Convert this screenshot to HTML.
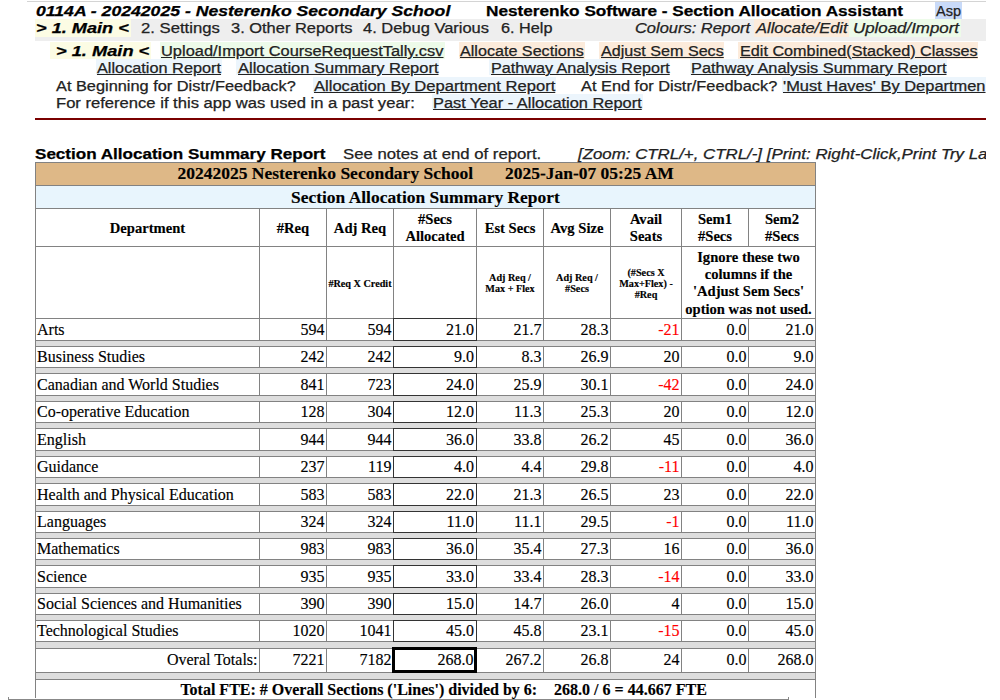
<!DOCTYPE html>
<html><head><meta charset="utf-8"><title>Section Allocation Summary Report</title>
<style>
html,body{margin:0;padding:0;background:#fff;width:1000px;height:700px;overflow:hidden}
#clip{position:absolute;left:0;top:0;width:986px;height:700px;overflow:hidden}
</style></head><body><div id="clip">
<div style="position:absolute;left:27px;top:1px;width:959px;height:1px;background:#d4d4d4"></div>
<div style="position:absolute;left:35px;top:19px;width:951px;height:22px;background:#eeeeee"></div>
<div style="position:absolute;left:35px;top:19px;width:96px;height:18px;background:#fcfce4"></div>
<div style="position:absolute;left:935px;top:2px;width:27px;height:17px;background:#c9daf8"></div>
<div style="position:absolute;left:754px;top:19px;width:95px;height:18px;background:#fcebdb"></div>
<div style="position:absolute;left:849px;top:19px;width:112px;height:18px;background:#edfbe9"></div>
<div style="position:absolute;left:50px;top:42px;width:101px;height:17px;background:#fcfce4"></div>
<div style="position:absolute;left:160px;top:42px;width:285px;height:17px;background:#edfbe9"></div>
<div style="position:absolute;left:459px;top:42px;width:126px;height:17px;background:#fcebdb"></div>
<div style="position:absolute;left:599px;top:42px;width:125px;height:17px;background:#fcebdb"></div>
<div style="position:absolute;left:738px;top:42px;width:240px;height:17px;background:#fcebdb"></div>
<div style="position:absolute;left:96px;top:59px;width:126px;height:16px;background:#ecf5fc"></div>
<div style="position:absolute;left:236px;top:59px;width:203px;height:16px;background:#ecf5fc"></div>
<div style="position:absolute;left:489px;top:59px;width:181px;height:16px;background:#ecf5fc"></div>
<div style="position:absolute;left:690px;top:59px;width:257px;height:16px;background:#ecf5fc"></div>
<div style="position:absolute;left:313px;top:77px;width:243px;height:16px;background:#ecf5fc"></div>
<div style="position:absolute;left:782px;top:77px;width:204px;height:16px;background:#ecf5fc"></div>
<div style="position:absolute;left:432px;top:94px;width:211px;height:16px;background:#ecf5fc"></div>
<div style="position:absolute;left:35px;top:118px;width:951px;height:2px;background:#7a0000"></div>
<div style="position:absolute;left:36px;top:163px;width:779px;height:22px;background:#deb887"></div>
<div style="position:absolute;left:36px;top:186px;width:779px;height:22px;background:#e8f5fd"></div>
<div style="position:absolute;left:36px;top:341px;width:779px;height:5px;background:#dddddd"></div>
<div style="position:absolute;left:36px;top:368px;width:779px;height:5px;background:#dddddd"></div>
<div style="position:absolute;left:36px;top:396px;width:779px;height:5px;background:#dddddd"></div>
<div style="position:absolute;left:36px;top:423px;width:779px;height:5px;background:#dddddd"></div>
<div style="position:absolute;left:36px;top:451px;width:779px;height:5px;background:#dddddd"></div>
<div style="position:absolute;left:36px;top:478px;width:779px;height:5px;background:#dddddd"></div>
<div style="position:absolute;left:36px;top:506px;width:779px;height:5px;background:#dddddd"></div>
<div style="position:absolute;left:36px;top:533px;width:779px;height:5px;background:#dddddd"></div>
<div style="position:absolute;left:36px;top:560px;width:779px;height:5px;background:#dddddd"></div>
<div style="position:absolute;left:36px;top:588px;width:779px;height:5px;background:#dddddd"></div>
<div style="position:absolute;left:36px;top:615px;width:779px;height:5px;background:#dddddd"></div>
<div style="position:absolute;left:36px;top:642px;width:779px;height:6px;background:#dddddd"></div>
<div style="position:absolute;left:36px;top:673px;width:779px;height:6px;background:#dddddd"></div>
<div style="position:absolute;left:35px;top:162px;width:781px;height:1px;background:#828282"></div>
<div style="position:absolute;left:35px;top:185px;width:781px;height:1px;background:#828282"></div>
<div style="position:absolute;left:35px;top:208px;width:781px;height:1px;background:#828282"></div>
<div style="position:absolute;left:35px;top:246px;width:781px;height:1px;background:#828282"></div>
<div style="position:absolute;left:35px;top:318px;width:781px;height:1px;background:#828282"></div>
<div style="position:absolute;left:35px;top:340px;width:781px;height:1px;background:#828282"></div>
<div style="position:absolute;left:35px;top:346px;width:781px;height:1px;background:#828282"></div>
<div style="position:absolute;left:35px;top:367px;width:781px;height:1px;background:#828282"></div>
<div style="position:absolute;left:35px;top:373px;width:781px;height:1px;background:#828282"></div>
<div style="position:absolute;left:35px;top:395px;width:781px;height:1px;background:#828282"></div>
<div style="position:absolute;left:35px;top:401px;width:781px;height:1px;background:#828282"></div>
<div style="position:absolute;left:35px;top:422px;width:781px;height:1px;background:#828282"></div>
<div style="position:absolute;left:35px;top:428px;width:781px;height:1px;background:#828282"></div>
<div style="position:absolute;left:35px;top:450px;width:781px;height:1px;background:#828282"></div>
<div style="position:absolute;left:35px;top:456px;width:781px;height:1px;background:#828282"></div>
<div style="position:absolute;left:35px;top:477px;width:781px;height:1px;background:#828282"></div>
<div style="position:absolute;left:35px;top:483px;width:781px;height:1px;background:#828282"></div>
<div style="position:absolute;left:35px;top:505px;width:781px;height:1px;background:#828282"></div>
<div style="position:absolute;left:35px;top:511px;width:781px;height:1px;background:#828282"></div>
<div style="position:absolute;left:35px;top:532px;width:781px;height:1px;background:#828282"></div>
<div style="position:absolute;left:35px;top:538px;width:781px;height:1px;background:#828282"></div>
<div style="position:absolute;left:35px;top:559px;width:781px;height:1px;background:#828282"></div>
<div style="position:absolute;left:35px;top:565px;width:781px;height:1px;background:#828282"></div>
<div style="position:absolute;left:35px;top:587px;width:781px;height:1px;background:#828282"></div>
<div style="position:absolute;left:35px;top:593px;width:781px;height:1px;background:#828282"></div>
<div style="position:absolute;left:35px;top:614px;width:781px;height:1px;background:#828282"></div>
<div style="position:absolute;left:35px;top:620px;width:781px;height:1px;background:#828282"></div>
<div style="position:absolute;left:35px;top:641px;width:781px;height:1px;background:#828282"></div>
<div style="position:absolute;left:35px;top:648px;width:781px;height:1px;background:#828282"></div>
<div style="position:absolute;left:35px;top:672px;width:781px;height:1px;background:#828282"></div>
<div style="position:absolute;left:35px;top:679px;width:781px;height:1px;background:#828282"></div>
<div style="position:absolute;left:8px;top:699px;width:781px;height:1px;background:#888888"></div>
<div style="position:absolute;left:8px;top:697px;width:1px;height:2px;background:#888888"></div>
<div style="position:absolute;left:788px;top:697px;width:1px;height:2px;background:#888888"></div>
<div style="position:absolute;left:35px;top:162px;width:1px;height:536px;background:#828282"></div>
<div style="position:absolute;left:815px;top:162px;width:1px;height:536px;background:#828282"></div>
<div style="position:absolute;left:259px;top:208px;width:1px;height:39px;background:#828282"></div>
<div style="position:absolute;left:326px;top:208px;width:1px;height:39px;background:#828282"></div>
<div style="position:absolute;left:393px;top:208px;width:1px;height:39px;background:#828282"></div>
<div style="position:absolute;left:476px;top:208px;width:1px;height:39px;background:#828282"></div>
<div style="position:absolute;left:543px;top:208px;width:1px;height:39px;background:#828282"></div>
<div style="position:absolute;left:610px;top:208px;width:1px;height:39px;background:#828282"></div>
<div style="position:absolute;left:681px;top:208px;width:1px;height:39px;background:#828282"></div>
<div style="position:absolute;left:748px;top:208px;width:1px;height:39px;background:#828282"></div>
<div style="position:absolute;left:259px;top:246px;width:1px;height:73px;background:#828282"></div>
<div style="position:absolute;left:326px;top:246px;width:1px;height:73px;background:#828282"></div>
<div style="position:absolute;left:393px;top:246px;width:1px;height:73px;background:#828282"></div>
<div style="position:absolute;left:476px;top:246px;width:1px;height:73px;background:#828282"></div>
<div style="position:absolute;left:543px;top:246px;width:1px;height:73px;background:#828282"></div>
<div style="position:absolute;left:610px;top:246px;width:1px;height:73px;background:#828282"></div>
<div style="position:absolute;left:681px;top:246px;width:1px;height:73px;background:#828282"></div>
<div style="position:absolute;left:259px;top:318px;width:1px;height:23px;background:#828282"></div>
<div style="position:absolute;left:326px;top:318px;width:1px;height:23px;background:#828282"></div>
<div style="position:absolute;left:393px;top:318px;width:1px;height:23px;background:#828282"></div>
<div style="position:absolute;left:476px;top:318px;width:1px;height:23px;background:#828282"></div>
<div style="position:absolute;left:543px;top:318px;width:1px;height:23px;background:#828282"></div>
<div style="position:absolute;left:610px;top:318px;width:1px;height:23px;background:#828282"></div>
<div style="position:absolute;left:681px;top:318px;width:1px;height:23px;background:#828282"></div>
<div style="position:absolute;left:748px;top:318px;width:1px;height:23px;background:#828282"></div>
<div style="position:absolute;left:259px;top:346px;width:1px;height:22px;background:#828282"></div>
<div style="position:absolute;left:326px;top:346px;width:1px;height:22px;background:#828282"></div>
<div style="position:absolute;left:393px;top:346px;width:1px;height:22px;background:#828282"></div>
<div style="position:absolute;left:476px;top:346px;width:1px;height:22px;background:#828282"></div>
<div style="position:absolute;left:543px;top:346px;width:1px;height:22px;background:#828282"></div>
<div style="position:absolute;left:610px;top:346px;width:1px;height:22px;background:#828282"></div>
<div style="position:absolute;left:681px;top:346px;width:1px;height:22px;background:#828282"></div>
<div style="position:absolute;left:748px;top:346px;width:1px;height:22px;background:#828282"></div>
<div style="position:absolute;left:259px;top:373px;width:1px;height:23px;background:#828282"></div>
<div style="position:absolute;left:326px;top:373px;width:1px;height:23px;background:#828282"></div>
<div style="position:absolute;left:393px;top:373px;width:1px;height:23px;background:#828282"></div>
<div style="position:absolute;left:476px;top:373px;width:1px;height:23px;background:#828282"></div>
<div style="position:absolute;left:543px;top:373px;width:1px;height:23px;background:#828282"></div>
<div style="position:absolute;left:610px;top:373px;width:1px;height:23px;background:#828282"></div>
<div style="position:absolute;left:681px;top:373px;width:1px;height:23px;background:#828282"></div>
<div style="position:absolute;left:748px;top:373px;width:1px;height:23px;background:#828282"></div>
<div style="position:absolute;left:259px;top:401px;width:1px;height:22px;background:#828282"></div>
<div style="position:absolute;left:326px;top:401px;width:1px;height:22px;background:#828282"></div>
<div style="position:absolute;left:393px;top:401px;width:1px;height:22px;background:#828282"></div>
<div style="position:absolute;left:476px;top:401px;width:1px;height:22px;background:#828282"></div>
<div style="position:absolute;left:543px;top:401px;width:1px;height:22px;background:#828282"></div>
<div style="position:absolute;left:610px;top:401px;width:1px;height:22px;background:#828282"></div>
<div style="position:absolute;left:681px;top:401px;width:1px;height:22px;background:#828282"></div>
<div style="position:absolute;left:748px;top:401px;width:1px;height:22px;background:#828282"></div>
<div style="position:absolute;left:259px;top:428px;width:1px;height:23px;background:#828282"></div>
<div style="position:absolute;left:326px;top:428px;width:1px;height:23px;background:#828282"></div>
<div style="position:absolute;left:393px;top:428px;width:1px;height:23px;background:#828282"></div>
<div style="position:absolute;left:476px;top:428px;width:1px;height:23px;background:#828282"></div>
<div style="position:absolute;left:543px;top:428px;width:1px;height:23px;background:#828282"></div>
<div style="position:absolute;left:610px;top:428px;width:1px;height:23px;background:#828282"></div>
<div style="position:absolute;left:681px;top:428px;width:1px;height:23px;background:#828282"></div>
<div style="position:absolute;left:748px;top:428px;width:1px;height:23px;background:#828282"></div>
<div style="position:absolute;left:259px;top:456px;width:1px;height:22px;background:#828282"></div>
<div style="position:absolute;left:326px;top:456px;width:1px;height:22px;background:#828282"></div>
<div style="position:absolute;left:393px;top:456px;width:1px;height:22px;background:#828282"></div>
<div style="position:absolute;left:476px;top:456px;width:1px;height:22px;background:#828282"></div>
<div style="position:absolute;left:543px;top:456px;width:1px;height:22px;background:#828282"></div>
<div style="position:absolute;left:610px;top:456px;width:1px;height:22px;background:#828282"></div>
<div style="position:absolute;left:681px;top:456px;width:1px;height:22px;background:#828282"></div>
<div style="position:absolute;left:748px;top:456px;width:1px;height:22px;background:#828282"></div>
<div style="position:absolute;left:259px;top:483px;width:1px;height:23px;background:#828282"></div>
<div style="position:absolute;left:326px;top:483px;width:1px;height:23px;background:#828282"></div>
<div style="position:absolute;left:393px;top:483px;width:1px;height:23px;background:#828282"></div>
<div style="position:absolute;left:476px;top:483px;width:1px;height:23px;background:#828282"></div>
<div style="position:absolute;left:543px;top:483px;width:1px;height:23px;background:#828282"></div>
<div style="position:absolute;left:610px;top:483px;width:1px;height:23px;background:#828282"></div>
<div style="position:absolute;left:681px;top:483px;width:1px;height:23px;background:#828282"></div>
<div style="position:absolute;left:748px;top:483px;width:1px;height:23px;background:#828282"></div>
<div style="position:absolute;left:259px;top:511px;width:1px;height:22px;background:#828282"></div>
<div style="position:absolute;left:326px;top:511px;width:1px;height:22px;background:#828282"></div>
<div style="position:absolute;left:393px;top:511px;width:1px;height:22px;background:#828282"></div>
<div style="position:absolute;left:476px;top:511px;width:1px;height:22px;background:#828282"></div>
<div style="position:absolute;left:543px;top:511px;width:1px;height:22px;background:#828282"></div>
<div style="position:absolute;left:610px;top:511px;width:1px;height:22px;background:#828282"></div>
<div style="position:absolute;left:681px;top:511px;width:1px;height:22px;background:#828282"></div>
<div style="position:absolute;left:748px;top:511px;width:1px;height:22px;background:#828282"></div>
<div style="position:absolute;left:259px;top:538px;width:1px;height:22px;background:#828282"></div>
<div style="position:absolute;left:326px;top:538px;width:1px;height:22px;background:#828282"></div>
<div style="position:absolute;left:393px;top:538px;width:1px;height:22px;background:#828282"></div>
<div style="position:absolute;left:476px;top:538px;width:1px;height:22px;background:#828282"></div>
<div style="position:absolute;left:543px;top:538px;width:1px;height:22px;background:#828282"></div>
<div style="position:absolute;left:610px;top:538px;width:1px;height:22px;background:#828282"></div>
<div style="position:absolute;left:681px;top:538px;width:1px;height:22px;background:#828282"></div>
<div style="position:absolute;left:748px;top:538px;width:1px;height:22px;background:#828282"></div>
<div style="position:absolute;left:259px;top:565px;width:1px;height:23px;background:#828282"></div>
<div style="position:absolute;left:326px;top:565px;width:1px;height:23px;background:#828282"></div>
<div style="position:absolute;left:393px;top:565px;width:1px;height:23px;background:#828282"></div>
<div style="position:absolute;left:476px;top:565px;width:1px;height:23px;background:#828282"></div>
<div style="position:absolute;left:543px;top:565px;width:1px;height:23px;background:#828282"></div>
<div style="position:absolute;left:610px;top:565px;width:1px;height:23px;background:#828282"></div>
<div style="position:absolute;left:681px;top:565px;width:1px;height:23px;background:#828282"></div>
<div style="position:absolute;left:748px;top:565px;width:1px;height:23px;background:#828282"></div>
<div style="position:absolute;left:259px;top:593px;width:1px;height:22px;background:#828282"></div>
<div style="position:absolute;left:326px;top:593px;width:1px;height:22px;background:#828282"></div>
<div style="position:absolute;left:393px;top:593px;width:1px;height:22px;background:#828282"></div>
<div style="position:absolute;left:476px;top:593px;width:1px;height:22px;background:#828282"></div>
<div style="position:absolute;left:543px;top:593px;width:1px;height:22px;background:#828282"></div>
<div style="position:absolute;left:610px;top:593px;width:1px;height:22px;background:#828282"></div>
<div style="position:absolute;left:681px;top:593px;width:1px;height:22px;background:#828282"></div>
<div style="position:absolute;left:748px;top:593px;width:1px;height:22px;background:#828282"></div>
<div style="position:absolute;left:259px;top:620px;width:1px;height:22px;background:#828282"></div>
<div style="position:absolute;left:326px;top:620px;width:1px;height:22px;background:#828282"></div>
<div style="position:absolute;left:393px;top:620px;width:1px;height:22px;background:#828282"></div>
<div style="position:absolute;left:476px;top:620px;width:1px;height:22px;background:#828282"></div>
<div style="position:absolute;left:543px;top:620px;width:1px;height:22px;background:#828282"></div>
<div style="position:absolute;left:610px;top:620px;width:1px;height:22px;background:#828282"></div>
<div style="position:absolute;left:681px;top:620px;width:1px;height:22px;background:#828282"></div>
<div style="position:absolute;left:748px;top:620px;width:1px;height:22px;background:#828282"></div>
<div style="position:absolute;left:259px;top:648px;width:1px;height:25px;background:#828282"></div>
<div style="position:absolute;left:326px;top:648px;width:1px;height:25px;background:#828282"></div>
<div style="position:absolute;left:393px;top:648px;width:1px;height:25px;background:#828282"></div>
<div style="position:absolute;left:476px;top:648px;width:1px;height:25px;background:#828282"></div>
<div style="position:absolute;left:543px;top:648px;width:1px;height:25px;background:#828282"></div>
<div style="position:absolute;left:610px;top:648px;width:1px;height:25px;background:#828282"></div>
<div style="position:absolute;left:681px;top:648px;width:1px;height:25px;background:#828282"></div>
<div style="position:absolute;left:748px;top:648px;width:1px;height:25px;background:#828282"></div>
<div style="position:absolute;left:393px;top:318px;width:84px;height:1px;background:#333"></div>
<div style="position:absolute;left:393px;top:340px;width:84px;height:1px;background:#333"></div>
<div style="position:absolute;left:393px;top:318px;width:1px;height:23px;background:#333"></div>
<div style="position:absolute;left:476px;top:318px;width:1px;height:23px;background:#333"></div>
<div style="position:absolute;left:393px;top:346px;width:84px;height:1px;background:#333"></div>
<div style="position:absolute;left:393px;top:367px;width:84px;height:1px;background:#333"></div>
<div style="position:absolute;left:393px;top:346px;width:1px;height:22px;background:#333"></div>
<div style="position:absolute;left:476px;top:346px;width:1px;height:22px;background:#333"></div>
<div style="position:absolute;left:393px;top:373px;width:84px;height:1px;background:#333"></div>
<div style="position:absolute;left:393px;top:395px;width:84px;height:1px;background:#333"></div>
<div style="position:absolute;left:393px;top:373px;width:1px;height:23px;background:#333"></div>
<div style="position:absolute;left:476px;top:373px;width:1px;height:23px;background:#333"></div>
<div style="position:absolute;left:393px;top:401px;width:84px;height:1px;background:#333"></div>
<div style="position:absolute;left:393px;top:422px;width:84px;height:1px;background:#333"></div>
<div style="position:absolute;left:393px;top:401px;width:1px;height:22px;background:#333"></div>
<div style="position:absolute;left:476px;top:401px;width:1px;height:22px;background:#333"></div>
<div style="position:absolute;left:393px;top:428px;width:84px;height:1px;background:#333"></div>
<div style="position:absolute;left:393px;top:450px;width:84px;height:1px;background:#333"></div>
<div style="position:absolute;left:393px;top:428px;width:1px;height:23px;background:#333"></div>
<div style="position:absolute;left:476px;top:428px;width:1px;height:23px;background:#333"></div>
<div style="position:absolute;left:393px;top:456px;width:84px;height:1px;background:#333"></div>
<div style="position:absolute;left:393px;top:477px;width:84px;height:1px;background:#333"></div>
<div style="position:absolute;left:393px;top:456px;width:1px;height:22px;background:#333"></div>
<div style="position:absolute;left:476px;top:456px;width:1px;height:22px;background:#333"></div>
<div style="position:absolute;left:393px;top:483px;width:84px;height:1px;background:#333"></div>
<div style="position:absolute;left:393px;top:505px;width:84px;height:1px;background:#333"></div>
<div style="position:absolute;left:393px;top:483px;width:1px;height:23px;background:#333"></div>
<div style="position:absolute;left:476px;top:483px;width:1px;height:23px;background:#333"></div>
<div style="position:absolute;left:393px;top:511px;width:84px;height:1px;background:#333"></div>
<div style="position:absolute;left:393px;top:532px;width:84px;height:1px;background:#333"></div>
<div style="position:absolute;left:393px;top:511px;width:1px;height:22px;background:#333"></div>
<div style="position:absolute;left:476px;top:511px;width:1px;height:22px;background:#333"></div>
<div style="position:absolute;left:393px;top:538px;width:84px;height:1px;background:#333"></div>
<div style="position:absolute;left:393px;top:559px;width:84px;height:1px;background:#333"></div>
<div style="position:absolute;left:393px;top:538px;width:1px;height:22px;background:#333"></div>
<div style="position:absolute;left:476px;top:538px;width:1px;height:22px;background:#333"></div>
<div style="position:absolute;left:393px;top:565px;width:84px;height:1px;background:#333"></div>
<div style="position:absolute;left:393px;top:587px;width:84px;height:1px;background:#333"></div>
<div style="position:absolute;left:393px;top:565px;width:1px;height:23px;background:#333"></div>
<div style="position:absolute;left:476px;top:565px;width:1px;height:23px;background:#333"></div>
<div style="position:absolute;left:393px;top:593px;width:84px;height:1px;background:#333"></div>
<div style="position:absolute;left:393px;top:614px;width:84px;height:1px;background:#333"></div>
<div style="position:absolute;left:393px;top:593px;width:1px;height:22px;background:#333"></div>
<div style="position:absolute;left:476px;top:593px;width:1px;height:22px;background:#333"></div>
<div style="position:absolute;left:393px;top:620px;width:84px;height:1px;background:#333"></div>
<div style="position:absolute;left:393px;top:641px;width:84px;height:1px;background:#333"></div>
<div style="position:absolute;left:393px;top:620px;width:1px;height:22px;background:#333"></div>
<div style="position:absolute;left:476px;top:620px;width:1px;height:22px;background:#333"></div>
<div style="position:absolute;left:392px;top:647px;width:85px;height:3px;background:#000"></div>
<div style="position:absolute;left:392px;top:670px;width:85px;height:3px;background:#000"></div>
<div style="position:absolute;left:392px;top:647px;width:3px;height:26px;background:#000"></div>
<div style="position:absolute;left:474px;top:647px;width:3px;height:26px;background:#000"></div>
<div style="position:absolute;left:35.50px;top:3.00px;white-space:pre;line-height:normal;color:#000;font-family:'Liberation Sans', sans-serif;font-size:14px;font-weight:bold;font-style:italic;text-decoration:none;transform:scaleX(1.2586);transform-origin:0 0;-webkit-text-stroke:0.25px #000;">0114A - 20242025 - Nesterenko Secondary School</div>
<div style="position:absolute;left:486.00px;top:3.00px;white-space:pre;line-height:normal;color:#000;font-family:'Liberation Sans', sans-serif;font-size:14px;font-weight:bold;font-style:normal;text-decoration:none;transform:scaleX(1.2275);transform-origin:0 0;-webkit-text-stroke:0.25px #000;">Nesterenko Software - Section Allocation Assistant</div>
<div style="position:absolute;left:935.80px;top:3.00px;white-space:pre;line-height:normal;color:#222;font-family:'Liberation Sans', sans-serif;font-size:14px;font-weight:normal;font-style:normal;text-decoration:none;transform:scaleX(1.0363);transform-origin:0 0;-webkit-text-stroke:0.25px #222;">Asp</div>
<div style="position:absolute;left:36.00px;top:20.00px;white-space:pre;line-height:normal;color:#000;font-family:'Liberation Sans', sans-serif;font-size:14px;font-weight:bold;font-style:italic;text-decoration:none;transform:scaleX(1.2955);transform-origin:0 0;-webkit-text-stroke:0.25px #000;">&gt; 1. Main &lt;</div>
<div style="position:absolute;left:141.25px;top:20.00px;white-space:pre;line-height:normal;color:#222;font-family:'Liberation Sans', sans-serif;font-size:14px;font-weight:normal;font-style:normal;text-decoration:none;transform:scaleX(1.1904);transform-origin:0 0;-webkit-text-stroke:0.25px #222;">2. Settings</div>
<div style="position:absolute;left:231.00px;top:20.00px;white-space:pre;line-height:normal;color:#222;font-family:'Liberation Sans', sans-serif;font-size:14px;font-weight:normal;font-style:normal;text-decoration:none;transform:scaleX(1.1739);transform-origin:0 0;-webkit-text-stroke:0.25px #222;">3. Other Reports</div>
<div style="position:absolute;left:363.00px;top:20.00px;white-space:pre;line-height:normal;color:#222;font-family:'Liberation Sans', sans-serif;font-size:14px;font-weight:normal;font-style:normal;text-decoration:none;transform:scaleX(1.1760);transform-origin:0 0;-webkit-text-stroke:0.25px #222;">4. Debug Various</div>
<div style="position:absolute;left:500.60px;top:20.00px;white-space:pre;line-height:normal;color:#222;font-family:'Liberation Sans', sans-serif;font-size:14px;font-weight:normal;font-style:normal;text-decoration:none;transform:scaleX(1.1587);transform-origin:0 0;-webkit-text-stroke:0.25px #222;">6. Help</div>
<div style="position:absolute;left:635.40px;top:20.00px;white-space:pre;line-height:normal;color:#222;font-family:'Liberation Sans', sans-serif;font-size:14px;font-weight:normal;font-style:italic;text-decoration:none;transform:scaleX(1.1739);transform-origin:0 0;-webkit-text-stroke:0.25px #222;">Colours: Report</div>
<div style="position:absolute;left:756.00px;top:20.00px;white-space:pre;line-height:normal;color:#222;font-family:'Liberation Sans', sans-serif;font-size:14px;font-weight:normal;font-style:italic;text-decoration:none;transform:scaleX(1.1770);transform-origin:0 0;-webkit-text-stroke:0.25px #222;">Allocate/Edit</div>
<div style="position:absolute;left:853.00px;top:20.00px;white-space:pre;line-height:normal;color:#222;font-family:'Liberation Sans', sans-serif;font-size:14px;font-weight:normal;font-style:italic;text-decoration:none;transform:scaleX(1.2054);transform-origin:0 0;-webkit-text-stroke:0.25px #222;">Upload/Import</div>
<div style="position:absolute;left:56.25px;top:43.00px;white-space:pre;line-height:normal;color:#000;font-family:'Liberation Sans', sans-serif;font-size:14px;font-weight:bold;font-style:italic;text-decoration:none;transform:scaleX(1.3025);transform-origin:0 0;-webkit-text-stroke:0.25px #000;">&gt; 1. Main &lt;</div>
<div style="position:absolute;left:161.25px;top:43.00px;white-space:pre;line-height:normal;color:#222;font-family:'Liberation Sans', sans-serif;font-size:14px;font-weight:normal;font-style:normal;text-decoration:underline;transform:scaleX(1.1724);transform-origin:0 0;-webkit-text-stroke:0.25px #222;">Upload/Import CourseRequestTally.csv</div>
<div style="position:absolute;left:460.00px;top:43.00px;white-space:pre;line-height:normal;color:#222;font-family:'Liberation Sans', sans-serif;font-size:14px;font-weight:normal;font-style:normal;text-decoration:underline;transform:scaleX(1.1522);transform-origin:0 0;-webkit-text-stroke:0.25px #222;">Allocate Sections</div>
<div style="position:absolute;left:600.50px;top:43.00px;white-space:pre;line-height:normal;color:#222;font-family:'Liberation Sans', sans-serif;font-size:14px;font-weight:normal;font-style:normal;text-decoration:underline;transform:scaleX(1.1514);transform-origin:0 0;-webkit-text-stroke:0.25px #222;">Adjust Sem Secs</div>
<div style="position:absolute;left:739.50px;top:43.00px;white-space:pre;line-height:normal;color:#222;font-family:'Liberation Sans', sans-serif;font-size:14px;font-weight:normal;font-style:normal;text-decoration:underline;transform:scaleX(1.1571);transform-origin:0 0;-webkit-text-stroke:0.25px #222;">Edit Combined(Stacked) Classes</div>
<div style="position:absolute;left:97.00px;top:60.00px;white-space:pre;line-height:normal;color:#222;font-family:'Liberation Sans', sans-serif;font-size:14px;font-weight:normal;font-style:normal;text-decoration:underline;transform:scaleX(1.1630);transform-origin:0 0;-webkit-text-stroke:0.25px #222;">Allocation Report</div>
<div style="position:absolute;left:237.50px;top:60.00px;white-space:pre;line-height:normal;color:#222;font-family:'Liberation Sans', sans-serif;font-size:14px;font-weight:normal;font-style:normal;text-decoration:underline;transform:scaleX(1.1766);transform-origin:0 0;-webkit-text-stroke:0.25px #222;">Allocation Summary Report</div>
<div style="position:absolute;left:490.75px;top:60.00px;white-space:pre;line-height:normal;color:#222;font-family:'Liberation Sans', sans-serif;font-size:14px;font-weight:normal;font-style:normal;text-decoration:underline;transform:scaleX(1.1543);transform-origin:0 0;-webkit-text-stroke:0.25px #222;">Pathway Analysis Report</div>
<div style="position:absolute;left:691.25px;top:60.00px;white-space:pre;line-height:normal;color:#222;font-family:'Liberation Sans', sans-serif;font-size:14px;font-weight:normal;font-style:normal;text-decoration:underline;transform:scaleX(1.1684);transform-origin:0 0;-webkit-text-stroke:0.25px #222;">Pathway Analysis Summary Report</div>
<div style="position:absolute;left:56.25px;top:78.00px;white-space:pre;line-height:normal;color:#222;font-family:'Liberation Sans', sans-serif;font-size:14px;font-weight:normal;font-style:normal;text-decoration:none;transform:scaleX(1.1669);transform-origin:0 0;-webkit-text-stroke:0.25px #222;">At Beginning for Distr/Feedback?</div>
<div style="position:absolute;left:313.75px;top:78.00px;white-space:pre;line-height:normal;color:#222;font-family:'Liberation Sans', sans-serif;font-size:14px;font-weight:normal;font-style:normal;text-decoration:underline;transform:scaleX(1.1833);transform-origin:0 0;-webkit-text-stroke:0.25px #222;">Allocation By Department Report</div>
<div style="position:absolute;left:581.25px;top:78.00px;white-space:pre;line-height:normal;color:#222;font-family:'Liberation Sans', sans-serif;font-size:14px;font-weight:normal;font-style:normal;text-decoration:none;transform:scaleX(1.1676);transform-origin:0 0;-webkit-text-stroke:0.25px #222;">At End for Distr/Feedback?</div>
<div style="position:absolute;left:783.30px;top:78.00px;white-space:pre;line-height:normal;color:#222;font-family:'Liberation Sans', sans-serif;font-size:14px;font-weight:normal;font-style:normal;text-decoration:underline;transform:scaleX(1.1730);transform-origin:0 0;-webkit-text-stroke:0.25px #222;">&#x27;Must Haves&#x27; By Departmen</div>
<div style="position:absolute;left:56.25px;top:95.00px;white-space:pre;line-height:normal;color:#222;font-family:'Liberation Sans', sans-serif;font-size:14px;font-weight:normal;font-style:normal;text-decoration:none;transform:scaleX(1.1851);transform-origin:0 0;-webkit-text-stroke:0.25px #222;">For reference if this app was used in a past year:</div>
<div style="position:absolute;left:433.00px;top:95.00px;white-space:pre;line-height:normal;color:#222;font-family:'Liberation Sans', sans-serif;font-size:14px;font-weight:normal;font-style:normal;text-decoration:underline;transform:scaleX(1.1712);transform-origin:0 0;-webkit-text-stroke:0.25px #222;">Past Year - Allocation Report</div>
<div style="position:absolute;left:35.40px;top:145.00px;white-space:pre;line-height:normal;color:#000;font-family:'Liberation Sans', sans-serif;font-size:15px;font-weight:bold;font-style:normal;text-decoration:none;transform:scaleX(1.1374);transform-origin:0 0;-webkit-text-stroke:0.25px #000;">Section Allocation Summary Report</div>
<div style="position:absolute;left:342.50px;top:146.00px;white-space:pre;line-height:normal;color:#222;font-family:'Liberation Sans', sans-serif;font-size:14px;font-weight:normal;font-style:normal;text-decoration:none;transform:scaleX(1.1956);transform-origin:0 0;-webkit-text-stroke:0.25px #222;">See notes at end of report.</div>
<div style="position:absolute;left:578.00px;top:146.00px;white-space:pre;line-height:normal;color:#222;font-family:'Liberation Sans', sans-serif;font-size:14px;font-weight:normal;font-style:italic;text-decoration:none;transform:scaleX(1.2039);transform-origin:0 0;-webkit-text-stroke:0.25px #222;">[Zoom: CTRL/+, CTRL/-] [Print: Right-Click,Print Try Landscape]</div>
<div style="position:absolute;left:177.40px;top:163.00px;white-space:pre;line-height:normal;color:#000;font-family:'Liberation Serif', serif;font-size:17.5px;font-weight:bold;font-style:normal;text-decoration:none;-webkit-text-stroke:0.15px #000;">20242025 Nesterenko Secondary School</div>
<div style="position:absolute;left:505.00px;top:163.00px;white-space:pre;line-height:normal;color:#000;font-family:'Liberation Serif', serif;font-size:17.5px;font-weight:bold;font-style:normal;text-decoration:none;transform:scaleX(0.9979);transform-origin:0 0;-webkit-text-stroke:0.15px #000;">2025-Jan-07 05:25 AM</div>
<div style="position:absolute;left:291.20px;top:187.00px;white-space:pre;line-height:normal;color:#000;font-family:'Liberation Serif', serif;font-size:17.5px;font-weight:bold;font-style:normal;text-decoration:none;transform:scaleX(0.9964);transform-origin:0 0;-webkit-text-stroke:0.15px #000;">Section Allocation Summary Report</div>
<div style="position:absolute;left:109.80px;top:220.00px;white-space:pre;line-height:normal;color:#000;font-family:'Liberation Serif', serif;font-size:14.6px;font-weight:bold;font-style:normal;text-decoration:none;-webkit-text-stroke:0.15px #000;">Department</div>
<div style="position:absolute;left:276.78px;top:220.00px;white-space:pre;line-height:normal;color:#000;font-family:'Liberation Serif', serif;font-size:14.6px;font-weight:bold;font-style:normal;text-decoration:none;-webkit-text-stroke:0.15px #000;">#Req</div>
<div style="position:absolute;left:333.85px;top:220.00px;white-space:pre;line-height:normal;color:#000;font-family:'Liberation Serif', serif;font-size:14.6px;font-weight:bold;font-style:normal;text-decoration:none;-webkit-text-stroke:0.15px #000;">Adj Req</div>
<div style="position:absolute;left:417.97px;top:211.00px;white-space:pre;line-height:normal;color:#000;font-family:'Liberation Serif', serif;font-size:14.6px;font-weight:bold;font-style:normal;text-decoration:none;-webkit-text-stroke:0.15px #000;">#Secs</div>
<div style="position:absolute;left:405.41px;top:228.00px;white-space:pre;line-height:normal;color:#000;font-family:'Liberation Serif', serif;font-size:14.6px;font-weight:bold;font-style:normal;text-decoration:none;-webkit-text-stroke:0.15px #000;">Allocated</div>
<div style="position:absolute;left:484.66px;top:220.00px;white-space:pre;line-height:normal;color:#000;font-family:'Liberation Serif', serif;font-size:14.6px;font-weight:bold;font-style:normal;text-decoration:none;-webkit-text-stroke:0.15px #000;">Est Secs</div>
<div style="position:absolute;left:550.59px;top:220.00px;white-space:pre;line-height:normal;color:#000;font-family:'Liberation Serif', serif;font-size:14.6px;font-weight:bold;font-style:normal;text-decoration:none;-webkit-text-stroke:0.15px #000;">Avg Size</div>
<div style="position:absolute;left:629.91px;top:211.00px;white-space:pre;line-height:normal;color:#000;font-family:'Liberation Serif', serif;font-size:14.6px;font-weight:bold;font-style:normal;text-decoration:none;-webkit-text-stroke:0.15px #000;">Avail</div>
<div style="position:absolute;left:629.78px;top:228.00px;white-space:pre;line-height:normal;color:#000;font-family:'Liberation Serif', serif;font-size:14.6px;font-weight:bold;font-style:normal;text-decoration:none;-webkit-text-stroke:0.15px #000;">Seats</div>
<div style="position:absolute;left:697.97px;top:211.00px;white-space:pre;line-height:normal;color:#000;font-family:'Liberation Serif', serif;font-size:14.6px;font-weight:bold;font-style:normal;text-decoration:none;-webkit-text-stroke:0.15px #000;">Sem1</div>
<div style="position:absolute;left:697.97px;top:228.00px;white-space:pre;line-height:normal;color:#000;font-family:'Liberation Serif', serif;font-size:14.6px;font-weight:bold;font-style:normal;text-decoration:none;-webkit-text-stroke:0.15px #000;">#Secs</div>
<div style="position:absolute;left:764.97px;top:211.00px;white-space:pre;line-height:normal;color:#000;font-family:'Liberation Serif', serif;font-size:14.6px;font-weight:bold;font-style:normal;text-decoration:none;-webkit-text-stroke:0.15px #000;">Sem2</div>
<div style="position:absolute;left:764.97px;top:228.00px;white-space:pre;line-height:normal;color:#000;font-family:'Liberation Serif', serif;font-size:14.6px;font-weight:bold;font-style:normal;text-decoration:none;-webkit-text-stroke:0.15px #000;">#Secs</div>
<div style="position:absolute;left:328.40px;top:278.00px;white-space:pre;line-height:normal;color:#000;font-family:'Liberation Serif', serif;font-size:10.2px;font-weight:bold;font-style:normal;text-decoration:none;-webkit-text-stroke:0.15px #000;">#Req X Credit</div>
<div style="position:absolute;left:489.05px;top:272.00px;white-space:pre;line-height:normal;color:#000;font-family:'Liberation Serif', serif;font-size:10.2px;font-weight:bold;font-style:normal;text-decoration:none;-webkit-text-stroke:0.15px #000;">Adj Req /</div>
<div style="position:absolute;left:485.31px;top:283.00px;white-space:pre;line-height:normal;color:#000;font-family:'Liberation Serif', serif;font-size:10.2px;font-weight:bold;font-style:normal;text-decoration:none;-webkit-text-stroke:0.15px #000;">Max + Flex</div>
<div style="position:absolute;left:556.05px;top:272.00px;white-space:pre;line-height:normal;color:#000;font-family:'Liberation Serif', serif;font-size:10.2px;font-weight:bold;font-style:normal;text-decoration:none;-webkit-text-stroke:0.15px #000;">Adj Req /</div>
<div style="position:absolute;left:565.11px;top:283.00px;white-space:pre;line-height:normal;color:#000;font-family:'Liberation Serif', serif;font-size:10.2px;font-weight:bold;font-style:normal;text-decoration:none;-webkit-text-stroke:0.15px #000;">#Secs</div>
<div style="position:absolute;left:627.46px;top:267.00px;white-space:pre;line-height:normal;color:#000;font-family:'Liberation Serif', serif;font-size:10.2px;font-weight:bold;font-style:normal;text-decoration:none;-webkit-text-stroke:0.15px #000;">(#Secs X</div>
<div style="position:absolute;left:619.20px;top:278.00px;white-space:pre;line-height:normal;color:#000;font-family:'Liberation Serif', serif;font-size:10.2px;font-weight:bold;font-style:normal;text-decoration:none;-webkit-text-stroke:0.15px #000;">Max+Flex) -</div>
<div style="position:absolute;left:634.68px;top:289.00px;white-space:pre;line-height:normal;color:#000;font-family:'Liberation Serif', serif;font-size:10.2px;font-weight:bold;font-style:normal;text-decoration:none;-webkit-text-stroke:0.15px #000;">#Req</div>
<div style="position:absolute;left:697.16px;top:249.00px;white-space:pre;line-height:normal;color:#000;font-family:'Liberation Serif', serif;font-size:14.6px;font-weight:bold;font-style:normal;text-decoration:none;-webkit-text-stroke:0.15px #000;">Ignore these two</div>
<div style="position:absolute;left:704.72px;top:266.20px;white-space:pre;line-height:normal;color:#000;font-family:'Liberation Serif', serif;font-size:14.6px;font-weight:bold;font-style:normal;text-decoration:none;-webkit-text-stroke:0.15px #000;">columns if the</div>
<div style="position:absolute;left:692.96px;top:283.40px;white-space:pre;line-height:normal;color:#000;font-family:'Liberation Serif', serif;font-size:14.6px;font-weight:bold;font-style:normal;text-decoration:none;-webkit-text-stroke:0.15px #000;">&#x27;Adjust Sem Secs&#x27;</div>
<div style="position:absolute;left:685.24px;top:300.60px;white-space:pre;line-height:normal;color:#000;font-family:'Liberation Serif', serif;font-size:14.6px;font-weight:bold;font-style:normal;text-decoration:none;-webkit-text-stroke:0.15px #000;">option was not used.</div>
<div style="position:absolute;left:37.00px;top:321.00px;white-space:pre;line-height:normal;color:#000;font-family:'Liberation Serif', serif;font-size:16px;font-weight:normal;font-style:normal;text-decoration:none;-webkit-text-stroke:0.15px #000;">Arts</div>
<div style="position:absolute;left:300.50px;top:321.00px;white-space:pre;line-height:normal;color:#000;font-family:'Liberation Serif', serif;font-size:16px;font-weight:normal;font-style:normal;text-decoration:none;-webkit-text-stroke:0.15px #000;">594</div>
<div style="position:absolute;left:367.50px;top:321.00px;white-space:pre;line-height:normal;color:#000;font-family:'Liberation Serif', serif;font-size:16px;font-weight:normal;font-style:normal;text-decoration:none;-webkit-text-stroke:0.15px #000;">594</div>
<div style="position:absolute;left:446.00px;top:321.00px;white-space:pre;line-height:normal;color:#000;font-family:'Liberation Serif', serif;font-size:16px;font-weight:normal;font-style:normal;text-decoration:none;-webkit-text-stroke:0.15px #000;">21.0</div>
<div style="position:absolute;left:513.50px;top:321.00px;white-space:pre;line-height:normal;color:#000;font-family:'Liberation Serif', serif;font-size:16px;font-weight:normal;font-style:normal;text-decoration:none;-webkit-text-stroke:0.15px #000;">21.7</div>
<div style="position:absolute;left:580.50px;top:321.00px;white-space:pre;line-height:normal;color:#000;font-family:'Liberation Serif', serif;font-size:16px;font-weight:normal;font-style:normal;text-decoration:none;-webkit-text-stroke:0.15px #000;">28.3</div>
<div style="position:absolute;left:658.17px;top:321.00px;white-space:pre;line-height:normal;color:#ff0000;font-family:'Liberation Serif', serif;font-size:16px;font-weight:normal;font-style:normal;text-decoration:none;-webkit-text-stroke:0.15px #ff0000;">-21</div>
<div style="position:absolute;left:726.50px;top:321.00px;white-space:pre;line-height:normal;color:#000;font-family:'Liberation Serif', serif;font-size:16px;font-weight:normal;font-style:normal;text-decoration:none;-webkit-text-stroke:0.15px #000;">0.0</div>
<div style="position:absolute;left:785.50px;top:321.00px;white-space:pre;line-height:normal;color:#000;font-family:'Liberation Serif', serif;font-size:16px;font-weight:normal;font-style:normal;text-decoration:none;-webkit-text-stroke:0.15px #000;">21.0</div>
<div style="position:absolute;left:37.00px;top:348.00px;white-space:pre;line-height:normal;color:#000;font-family:'Liberation Serif', serif;font-size:16px;font-weight:normal;font-style:normal;text-decoration:none;-webkit-text-stroke:0.15px #000;">Business Studies</div>
<div style="position:absolute;left:300.50px;top:348.00px;white-space:pre;line-height:normal;color:#000;font-family:'Liberation Serif', serif;font-size:16px;font-weight:normal;font-style:normal;text-decoration:none;-webkit-text-stroke:0.15px #000;">242</div>
<div style="position:absolute;left:367.50px;top:348.00px;white-space:pre;line-height:normal;color:#000;font-family:'Liberation Serif', serif;font-size:16px;font-weight:normal;font-style:normal;text-decoration:none;-webkit-text-stroke:0.15px #000;">242</div>
<div style="position:absolute;left:454.00px;top:348.00px;white-space:pre;line-height:normal;color:#000;font-family:'Liberation Serif', serif;font-size:16px;font-weight:normal;font-style:normal;text-decoration:none;-webkit-text-stroke:0.15px #000;">9.0</div>
<div style="position:absolute;left:521.50px;top:348.00px;white-space:pre;line-height:normal;color:#000;font-family:'Liberation Serif', serif;font-size:16px;font-weight:normal;font-style:normal;text-decoration:none;-webkit-text-stroke:0.15px #000;">8.3</div>
<div style="position:absolute;left:580.50px;top:348.00px;white-space:pre;line-height:normal;color:#000;font-family:'Liberation Serif', serif;font-size:16px;font-weight:normal;font-style:normal;text-decoration:none;-webkit-text-stroke:0.15px #000;">26.9</div>
<div style="position:absolute;left:663.50px;top:348.00px;white-space:pre;line-height:normal;color:#000;font-family:'Liberation Serif', serif;font-size:16px;font-weight:normal;font-style:normal;text-decoration:none;-webkit-text-stroke:0.15px #000;">20</div>
<div style="position:absolute;left:726.50px;top:348.00px;white-space:pre;line-height:normal;color:#000;font-family:'Liberation Serif', serif;font-size:16px;font-weight:normal;font-style:normal;text-decoration:none;-webkit-text-stroke:0.15px #000;">0.0</div>
<div style="position:absolute;left:793.50px;top:348.00px;white-space:pre;line-height:normal;color:#000;font-family:'Liberation Serif', serif;font-size:16px;font-weight:normal;font-style:normal;text-decoration:none;-webkit-text-stroke:0.15px #000;">9.0</div>
<div style="position:absolute;left:37.00px;top:376.00px;white-space:pre;line-height:normal;color:#000;font-family:'Liberation Serif', serif;font-size:16px;font-weight:normal;font-style:normal;text-decoration:none;-webkit-text-stroke:0.15px #000;">Canadian and World Studies</div>
<div style="position:absolute;left:300.50px;top:376.00px;white-space:pre;line-height:normal;color:#000;font-family:'Liberation Serif', serif;font-size:16px;font-weight:normal;font-style:normal;text-decoration:none;-webkit-text-stroke:0.15px #000;">841</div>
<div style="position:absolute;left:367.50px;top:376.00px;white-space:pre;line-height:normal;color:#000;font-family:'Liberation Serif', serif;font-size:16px;font-weight:normal;font-style:normal;text-decoration:none;-webkit-text-stroke:0.15px #000;">723</div>
<div style="position:absolute;left:446.00px;top:376.00px;white-space:pre;line-height:normal;color:#000;font-family:'Liberation Serif', serif;font-size:16px;font-weight:normal;font-style:normal;text-decoration:none;-webkit-text-stroke:0.15px #000;">24.0</div>
<div style="position:absolute;left:513.50px;top:376.00px;white-space:pre;line-height:normal;color:#000;font-family:'Liberation Serif', serif;font-size:16px;font-weight:normal;font-style:normal;text-decoration:none;-webkit-text-stroke:0.15px #000;">25.9</div>
<div style="position:absolute;left:580.50px;top:376.00px;white-space:pre;line-height:normal;color:#000;font-family:'Liberation Serif', serif;font-size:16px;font-weight:normal;font-style:normal;text-decoration:none;-webkit-text-stroke:0.15px #000;">30.1</div>
<div style="position:absolute;left:658.17px;top:376.00px;white-space:pre;line-height:normal;color:#ff0000;font-family:'Liberation Serif', serif;font-size:16px;font-weight:normal;font-style:normal;text-decoration:none;-webkit-text-stroke:0.15px #ff0000;">-42</div>
<div style="position:absolute;left:726.50px;top:376.00px;white-space:pre;line-height:normal;color:#000;font-family:'Liberation Serif', serif;font-size:16px;font-weight:normal;font-style:normal;text-decoration:none;-webkit-text-stroke:0.15px #000;">0.0</div>
<div style="position:absolute;left:785.50px;top:376.00px;white-space:pre;line-height:normal;color:#000;font-family:'Liberation Serif', serif;font-size:16px;font-weight:normal;font-style:normal;text-decoration:none;-webkit-text-stroke:0.15px #000;">24.0</div>
<div style="position:absolute;left:37.00px;top:403.00px;white-space:pre;line-height:normal;color:#000;font-family:'Liberation Serif', serif;font-size:16px;font-weight:normal;font-style:normal;text-decoration:none;-webkit-text-stroke:0.15px #000;">Co-operative Education</div>
<div style="position:absolute;left:300.50px;top:403.00px;white-space:pre;line-height:normal;color:#000;font-family:'Liberation Serif', serif;font-size:16px;font-weight:normal;font-style:normal;text-decoration:none;-webkit-text-stroke:0.15px #000;">128</div>
<div style="position:absolute;left:367.50px;top:403.00px;white-space:pre;line-height:normal;color:#000;font-family:'Liberation Serif', serif;font-size:16px;font-weight:normal;font-style:normal;text-decoration:none;-webkit-text-stroke:0.15px #000;">304</div>
<div style="position:absolute;left:446.00px;top:403.00px;white-space:pre;line-height:normal;color:#000;font-family:'Liberation Serif', serif;font-size:16px;font-weight:normal;font-style:normal;text-decoration:none;-webkit-text-stroke:0.15px #000;">12.0</div>
<div style="position:absolute;left:514.09px;top:403.00px;white-space:pre;line-height:normal;color:#000;font-family:'Liberation Serif', serif;font-size:16px;font-weight:normal;font-style:normal;text-decoration:none;-webkit-text-stroke:0.15px #000;">11.3</div>
<div style="position:absolute;left:580.50px;top:403.00px;white-space:pre;line-height:normal;color:#000;font-family:'Liberation Serif', serif;font-size:16px;font-weight:normal;font-style:normal;text-decoration:none;-webkit-text-stroke:0.15px #000;">25.3</div>
<div style="position:absolute;left:663.50px;top:403.00px;white-space:pre;line-height:normal;color:#000;font-family:'Liberation Serif', serif;font-size:16px;font-weight:normal;font-style:normal;text-decoration:none;-webkit-text-stroke:0.15px #000;">20</div>
<div style="position:absolute;left:726.50px;top:403.00px;white-space:pre;line-height:normal;color:#000;font-family:'Liberation Serif', serif;font-size:16px;font-weight:normal;font-style:normal;text-decoration:none;-webkit-text-stroke:0.15px #000;">0.0</div>
<div style="position:absolute;left:785.50px;top:403.00px;white-space:pre;line-height:normal;color:#000;font-family:'Liberation Serif', serif;font-size:16px;font-weight:normal;font-style:normal;text-decoration:none;-webkit-text-stroke:0.15px #000;">12.0</div>
<div style="position:absolute;left:37.00px;top:431.00px;white-space:pre;line-height:normal;color:#000;font-family:'Liberation Serif', serif;font-size:16px;font-weight:normal;font-style:normal;text-decoration:none;-webkit-text-stroke:0.15px #000;">English</div>
<div style="position:absolute;left:300.50px;top:431.00px;white-space:pre;line-height:normal;color:#000;font-family:'Liberation Serif', serif;font-size:16px;font-weight:normal;font-style:normal;text-decoration:none;-webkit-text-stroke:0.15px #000;">944</div>
<div style="position:absolute;left:367.50px;top:431.00px;white-space:pre;line-height:normal;color:#000;font-family:'Liberation Serif', serif;font-size:16px;font-weight:normal;font-style:normal;text-decoration:none;-webkit-text-stroke:0.15px #000;">944</div>
<div style="position:absolute;left:446.00px;top:431.00px;white-space:pre;line-height:normal;color:#000;font-family:'Liberation Serif', serif;font-size:16px;font-weight:normal;font-style:normal;text-decoration:none;-webkit-text-stroke:0.15px #000;">36.0</div>
<div style="position:absolute;left:513.50px;top:431.00px;white-space:pre;line-height:normal;color:#000;font-family:'Liberation Serif', serif;font-size:16px;font-weight:normal;font-style:normal;text-decoration:none;-webkit-text-stroke:0.15px #000;">33.8</div>
<div style="position:absolute;left:580.50px;top:431.00px;white-space:pre;line-height:normal;color:#000;font-family:'Liberation Serif', serif;font-size:16px;font-weight:normal;font-style:normal;text-decoration:none;-webkit-text-stroke:0.15px #000;">26.2</div>
<div style="position:absolute;left:663.50px;top:431.00px;white-space:pre;line-height:normal;color:#000;font-family:'Liberation Serif', serif;font-size:16px;font-weight:normal;font-style:normal;text-decoration:none;-webkit-text-stroke:0.15px #000;">45</div>
<div style="position:absolute;left:726.50px;top:431.00px;white-space:pre;line-height:normal;color:#000;font-family:'Liberation Serif', serif;font-size:16px;font-weight:normal;font-style:normal;text-decoration:none;-webkit-text-stroke:0.15px #000;">0.0</div>
<div style="position:absolute;left:785.50px;top:431.00px;white-space:pre;line-height:normal;color:#000;font-family:'Liberation Serif', serif;font-size:16px;font-weight:normal;font-style:normal;text-decoration:none;-webkit-text-stroke:0.15px #000;">36.0</div>
<div style="position:absolute;left:37.00px;top:458.00px;white-space:pre;line-height:normal;color:#000;font-family:'Liberation Serif', serif;font-size:16px;font-weight:normal;font-style:normal;text-decoration:none;-webkit-text-stroke:0.15px #000;">Guidance</div>
<div style="position:absolute;left:300.50px;top:458.00px;white-space:pre;line-height:normal;color:#000;font-family:'Liberation Serif', serif;font-size:16px;font-weight:normal;font-style:normal;text-decoration:none;-webkit-text-stroke:0.15px #000;">237</div>
<div style="position:absolute;left:368.09px;top:458.00px;white-space:pre;line-height:normal;color:#000;font-family:'Liberation Serif', serif;font-size:16px;font-weight:normal;font-style:normal;text-decoration:none;-webkit-text-stroke:0.15px #000;">119</div>
<div style="position:absolute;left:454.00px;top:458.00px;white-space:pre;line-height:normal;color:#000;font-family:'Liberation Serif', serif;font-size:16px;font-weight:normal;font-style:normal;text-decoration:none;-webkit-text-stroke:0.15px #000;">4.0</div>
<div style="position:absolute;left:521.50px;top:458.00px;white-space:pre;line-height:normal;color:#000;font-family:'Liberation Serif', serif;font-size:16px;font-weight:normal;font-style:normal;text-decoration:none;-webkit-text-stroke:0.15px #000;">4.4</div>
<div style="position:absolute;left:580.50px;top:458.00px;white-space:pre;line-height:normal;color:#000;font-family:'Liberation Serif', serif;font-size:16px;font-weight:normal;font-style:normal;text-decoration:none;-webkit-text-stroke:0.15px #000;">29.8</div>
<div style="position:absolute;left:658.77px;top:458.00px;white-space:pre;line-height:normal;color:#ff0000;font-family:'Liberation Serif', serif;font-size:16px;font-weight:normal;font-style:normal;text-decoration:none;-webkit-text-stroke:0.15px #ff0000;">-11</div>
<div style="position:absolute;left:726.50px;top:458.00px;white-space:pre;line-height:normal;color:#000;font-family:'Liberation Serif', serif;font-size:16px;font-weight:normal;font-style:normal;text-decoration:none;-webkit-text-stroke:0.15px #000;">0.0</div>
<div style="position:absolute;left:793.50px;top:458.00px;white-space:pre;line-height:normal;color:#000;font-family:'Liberation Serif', serif;font-size:16px;font-weight:normal;font-style:normal;text-decoration:none;-webkit-text-stroke:0.15px #000;">4.0</div>
<div style="position:absolute;left:37.00px;top:486.00px;white-space:pre;line-height:normal;color:#000;font-family:'Liberation Serif', serif;font-size:16px;font-weight:normal;font-style:normal;text-decoration:none;-webkit-text-stroke:0.15px #000;">Health and Physical Education</div>
<div style="position:absolute;left:300.50px;top:486.00px;white-space:pre;line-height:normal;color:#000;font-family:'Liberation Serif', serif;font-size:16px;font-weight:normal;font-style:normal;text-decoration:none;-webkit-text-stroke:0.15px #000;">583</div>
<div style="position:absolute;left:367.50px;top:486.00px;white-space:pre;line-height:normal;color:#000;font-family:'Liberation Serif', serif;font-size:16px;font-weight:normal;font-style:normal;text-decoration:none;-webkit-text-stroke:0.15px #000;">583</div>
<div style="position:absolute;left:446.00px;top:486.00px;white-space:pre;line-height:normal;color:#000;font-family:'Liberation Serif', serif;font-size:16px;font-weight:normal;font-style:normal;text-decoration:none;-webkit-text-stroke:0.15px #000;">22.0</div>
<div style="position:absolute;left:513.50px;top:486.00px;white-space:pre;line-height:normal;color:#000;font-family:'Liberation Serif', serif;font-size:16px;font-weight:normal;font-style:normal;text-decoration:none;-webkit-text-stroke:0.15px #000;">21.3</div>
<div style="position:absolute;left:580.50px;top:486.00px;white-space:pre;line-height:normal;color:#000;font-family:'Liberation Serif', serif;font-size:16px;font-weight:normal;font-style:normal;text-decoration:none;-webkit-text-stroke:0.15px #000;">26.5</div>
<div style="position:absolute;left:663.50px;top:486.00px;white-space:pre;line-height:normal;color:#000;font-family:'Liberation Serif', serif;font-size:16px;font-weight:normal;font-style:normal;text-decoration:none;-webkit-text-stroke:0.15px #000;">23</div>
<div style="position:absolute;left:726.50px;top:486.00px;white-space:pre;line-height:normal;color:#000;font-family:'Liberation Serif', serif;font-size:16px;font-weight:normal;font-style:normal;text-decoration:none;-webkit-text-stroke:0.15px #000;">0.0</div>
<div style="position:absolute;left:785.50px;top:486.00px;white-space:pre;line-height:normal;color:#000;font-family:'Liberation Serif', serif;font-size:16px;font-weight:normal;font-style:normal;text-decoration:none;-webkit-text-stroke:0.15px #000;">22.0</div>
<div style="position:absolute;left:37.00px;top:513.00px;white-space:pre;line-height:normal;color:#000;font-family:'Liberation Serif', serif;font-size:16px;font-weight:normal;font-style:normal;text-decoration:none;-webkit-text-stroke:0.15px #000;">Languages</div>
<div style="position:absolute;left:300.50px;top:513.00px;white-space:pre;line-height:normal;color:#000;font-family:'Liberation Serif', serif;font-size:16px;font-weight:normal;font-style:normal;text-decoration:none;-webkit-text-stroke:0.15px #000;">324</div>
<div style="position:absolute;left:367.50px;top:513.00px;white-space:pre;line-height:normal;color:#000;font-family:'Liberation Serif', serif;font-size:16px;font-weight:normal;font-style:normal;text-decoration:none;-webkit-text-stroke:0.15px #000;">324</div>
<div style="position:absolute;left:446.59px;top:513.00px;white-space:pre;line-height:normal;color:#000;font-family:'Liberation Serif', serif;font-size:16px;font-weight:normal;font-style:normal;text-decoration:none;-webkit-text-stroke:0.15px #000;">11.0</div>
<div style="position:absolute;left:514.09px;top:513.00px;white-space:pre;line-height:normal;color:#000;font-family:'Liberation Serif', serif;font-size:16px;font-weight:normal;font-style:normal;text-decoration:none;-webkit-text-stroke:0.15px #000;">11.1</div>
<div style="position:absolute;left:580.50px;top:513.00px;white-space:pre;line-height:normal;color:#000;font-family:'Liberation Serif', serif;font-size:16px;font-weight:normal;font-style:normal;text-decoration:none;-webkit-text-stroke:0.15px #000;">29.5</div>
<div style="position:absolute;left:666.17px;top:513.00px;white-space:pre;line-height:normal;color:#ff0000;font-family:'Liberation Serif', serif;font-size:16px;font-weight:normal;font-style:normal;text-decoration:none;-webkit-text-stroke:0.15px #ff0000;">-1</div>
<div style="position:absolute;left:726.50px;top:513.00px;white-space:pre;line-height:normal;color:#000;font-family:'Liberation Serif', serif;font-size:16px;font-weight:normal;font-style:normal;text-decoration:none;-webkit-text-stroke:0.15px #000;">0.0</div>
<div style="position:absolute;left:786.09px;top:513.00px;white-space:pre;line-height:normal;color:#000;font-family:'Liberation Serif', serif;font-size:16px;font-weight:normal;font-style:normal;text-decoration:none;-webkit-text-stroke:0.15px #000;">11.0</div>
<div style="position:absolute;left:37.00px;top:540.00px;white-space:pre;line-height:normal;color:#000;font-family:'Liberation Serif', serif;font-size:16px;font-weight:normal;font-style:normal;text-decoration:none;-webkit-text-stroke:0.15px #000;">Mathematics</div>
<div style="position:absolute;left:300.50px;top:540.00px;white-space:pre;line-height:normal;color:#000;font-family:'Liberation Serif', serif;font-size:16px;font-weight:normal;font-style:normal;text-decoration:none;-webkit-text-stroke:0.15px #000;">983</div>
<div style="position:absolute;left:367.50px;top:540.00px;white-space:pre;line-height:normal;color:#000;font-family:'Liberation Serif', serif;font-size:16px;font-weight:normal;font-style:normal;text-decoration:none;-webkit-text-stroke:0.15px #000;">983</div>
<div style="position:absolute;left:446.00px;top:540.00px;white-space:pre;line-height:normal;color:#000;font-family:'Liberation Serif', serif;font-size:16px;font-weight:normal;font-style:normal;text-decoration:none;-webkit-text-stroke:0.15px #000;">36.0</div>
<div style="position:absolute;left:513.50px;top:540.00px;white-space:pre;line-height:normal;color:#000;font-family:'Liberation Serif', serif;font-size:16px;font-weight:normal;font-style:normal;text-decoration:none;-webkit-text-stroke:0.15px #000;">35.4</div>
<div style="position:absolute;left:580.50px;top:540.00px;white-space:pre;line-height:normal;color:#000;font-family:'Liberation Serif', serif;font-size:16px;font-weight:normal;font-style:normal;text-decoration:none;-webkit-text-stroke:0.15px #000;">27.3</div>
<div style="position:absolute;left:663.50px;top:540.00px;white-space:pre;line-height:normal;color:#000;font-family:'Liberation Serif', serif;font-size:16px;font-weight:normal;font-style:normal;text-decoration:none;-webkit-text-stroke:0.15px #000;">16</div>
<div style="position:absolute;left:726.50px;top:540.00px;white-space:pre;line-height:normal;color:#000;font-family:'Liberation Serif', serif;font-size:16px;font-weight:normal;font-style:normal;text-decoration:none;-webkit-text-stroke:0.15px #000;">0.0</div>
<div style="position:absolute;left:785.50px;top:540.00px;white-space:pre;line-height:normal;color:#000;font-family:'Liberation Serif', serif;font-size:16px;font-weight:normal;font-style:normal;text-decoration:none;-webkit-text-stroke:0.15px #000;">36.0</div>
<div style="position:absolute;left:37.00px;top:568.00px;white-space:pre;line-height:normal;color:#000;font-family:'Liberation Serif', serif;font-size:16px;font-weight:normal;font-style:normal;text-decoration:none;-webkit-text-stroke:0.15px #000;">Science</div>
<div style="position:absolute;left:300.50px;top:568.00px;white-space:pre;line-height:normal;color:#000;font-family:'Liberation Serif', serif;font-size:16px;font-weight:normal;font-style:normal;text-decoration:none;-webkit-text-stroke:0.15px #000;">935</div>
<div style="position:absolute;left:367.50px;top:568.00px;white-space:pre;line-height:normal;color:#000;font-family:'Liberation Serif', serif;font-size:16px;font-weight:normal;font-style:normal;text-decoration:none;-webkit-text-stroke:0.15px #000;">935</div>
<div style="position:absolute;left:446.00px;top:568.00px;white-space:pre;line-height:normal;color:#000;font-family:'Liberation Serif', serif;font-size:16px;font-weight:normal;font-style:normal;text-decoration:none;-webkit-text-stroke:0.15px #000;">33.0</div>
<div style="position:absolute;left:513.50px;top:568.00px;white-space:pre;line-height:normal;color:#000;font-family:'Liberation Serif', serif;font-size:16px;font-weight:normal;font-style:normal;text-decoration:none;-webkit-text-stroke:0.15px #000;">33.4</div>
<div style="position:absolute;left:580.50px;top:568.00px;white-space:pre;line-height:normal;color:#000;font-family:'Liberation Serif', serif;font-size:16px;font-weight:normal;font-style:normal;text-decoration:none;-webkit-text-stroke:0.15px #000;">28.3</div>
<div style="position:absolute;left:658.17px;top:568.00px;white-space:pre;line-height:normal;color:#ff0000;font-family:'Liberation Serif', serif;font-size:16px;font-weight:normal;font-style:normal;text-decoration:none;-webkit-text-stroke:0.15px #ff0000;">-14</div>
<div style="position:absolute;left:726.50px;top:568.00px;white-space:pre;line-height:normal;color:#000;font-family:'Liberation Serif', serif;font-size:16px;font-weight:normal;font-style:normal;text-decoration:none;-webkit-text-stroke:0.15px #000;">0.0</div>
<div style="position:absolute;left:785.50px;top:568.00px;white-space:pre;line-height:normal;color:#000;font-family:'Liberation Serif', serif;font-size:16px;font-weight:normal;font-style:normal;text-decoration:none;-webkit-text-stroke:0.15px #000;">33.0</div>
<div style="position:absolute;left:37.00px;top:595.00px;white-space:pre;line-height:normal;color:#000;font-family:'Liberation Serif', serif;font-size:16px;font-weight:normal;font-style:normal;text-decoration:none;-webkit-text-stroke:0.15px #000;">Social Sciences and Humanities</div>
<div style="position:absolute;left:300.50px;top:595.00px;white-space:pre;line-height:normal;color:#000;font-family:'Liberation Serif', serif;font-size:16px;font-weight:normal;font-style:normal;text-decoration:none;-webkit-text-stroke:0.15px #000;">390</div>
<div style="position:absolute;left:367.50px;top:595.00px;white-space:pre;line-height:normal;color:#000;font-family:'Liberation Serif', serif;font-size:16px;font-weight:normal;font-style:normal;text-decoration:none;-webkit-text-stroke:0.15px #000;">390</div>
<div style="position:absolute;left:446.00px;top:595.00px;white-space:pre;line-height:normal;color:#000;font-family:'Liberation Serif', serif;font-size:16px;font-weight:normal;font-style:normal;text-decoration:none;-webkit-text-stroke:0.15px #000;">15.0</div>
<div style="position:absolute;left:513.50px;top:595.00px;white-space:pre;line-height:normal;color:#000;font-family:'Liberation Serif', serif;font-size:16px;font-weight:normal;font-style:normal;text-decoration:none;-webkit-text-stroke:0.15px #000;">14.7</div>
<div style="position:absolute;left:580.50px;top:595.00px;white-space:pre;line-height:normal;color:#000;font-family:'Liberation Serif', serif;font-size:16px;font-weight:normal;font-style:normal;text-decoration:none;-webkit-text-stroke:0.15px #000;">26.0</div>
<div style="position:absolute;left:671.50px;top:595.00px;white-space:pre;line-height:normal;color:#000;font-family:'Liberation Serif', serif;font-size:16px;font-weight:normal;font-style:normal;text-decoration:none;-webkit-text-stroke:0.15px #000;">4</div>
<div style="position:absolute;left:726.50px;top:595.00px;white-space:pre;line-height:normal;color:#000;font-family:'Liberation Serif', serif;font-size:16px;font-weight:normal;font-style:normal;text-decoration:none;-webkit-text-stroke:0.15px #000;">0.0</div>
<div style="position:absolute;left:785.50px;top:595.00px;white-space:pre;line-height:normal;color:#000;font-family:'Liberation Serif', serif;font-size:16px;font-weight:normal;font-style:normal;text-decoration:none;-webkit-text-stroke:0.15px #000;">15.0</div>
<div style="position:absolute;left:37.00px;top:622.00px;white-space:pre;line-height:normal;color:#000;font-family:'Liberation Serif', serif;font-size:16px;font-weight:normal;font-style:normal;text-decoration:none;-webkit-text-stroke:0.15px #000;">Technological Studies</div>
<div style="position:absolute;left:292.50px;top:622.00px;white-space:pre;line-height:normal;color:#000;font-family:'Liberation Serif', serif;font-size:16px;font-weight:normal;font-style:normal;text-decoration:none;-webkit-text-stroke:0.15px #000;">1020</div>
<div style="position:absolute;left:359.50px;top:622.00px;white-space:pre;line-height:normal;color:#000;font-family:'Liberation Serif', serif;font-size:16px;font-weight:normal;font-style:normal;text-decoration:none;-webkit-text-stroke:0.15px #000;">1041</div>
<div style="position:absolute;left:446.00px;top:622.00px;white-space:pre;line-height:normal;color:#000;font-family:'Liberation Serif', serif;font-size:16px;font-weight:normal;font-style:normal;text-decoration:none;-webkit-text-stroke:0.15px #000;">45.0</div>
<div style="position:absolute;left:513.50px;top:622.00px;white-space:pre;line-height:normal;color:#000;font-family:'Liberation Serif', serif;font-size:16px;font-weight:normal;font-style:normal;text-decoration:none;-webkit-text-stroke:0.15px #000;">45.8</div>
<div style="position:absolute;left:580.50px;top:622.00px;white-space:pre;line-height:normal;color:#000;font-family:'Liberation Serif', serif;font-size:16px;font-weight:normal;font-style:normal;text-decoration:none;-webkit-text-stroke:0.15px #000;">23.1</div>
<div style="position:absolute;left:658.17px;top:622.00px;white-space:pre;line-height:normal;color:#ff0000;font-family:'Liberation Serif', serif;font-size:16px;font-weight:normal;font-style:normal;text-decoration:none;-webkit-text-stroke:0.15px #ff0000;">-15</div>
<div style="position:absolute;left:726.50px;top:622.00px;white-space:pre;line-height:normal;color:#000;font-family:'Liberation Serif', serif;font-size:16px;font-weight:normal;font-style:normal;text-decoration:none;-webkit-text-stroke:0.15px #000;">0.0</div>
<div style="position:absolute;left:785.50px;top:622.00px;white-space:pre;line-height:normal;color:#000;font-family:'Liberation Serif', serif;font-size:16px;font-weight:normal;font-style:normal;text-decoration:none;-webkit-text-stroke:0.15px #000;">45.0</div>
<div style="position:absolute;left:166.94px;top:651.00px;white-space:pre;line-height:normal;color:#000;font-family:'Liberation Serif', serif;font-size:16px;font-weight:normal;font-style:normal;text-decoration:none;-webkit-text-stroke:0.15px #000;">Overal Totals:</div>
<div style="position:absolute;left:292.50px;top:651.00px;white-space:pre;line-height:normal;color:#000;font-family:'Liberation Serif', serif;font-size:16px;font-weight:normal;font-style:normal;text-decoration:none;-webkit-text-stroke:0.15px #000;">7221</div>
<div style="position:absolute;left:359.50px;top:651.00px;white-space:pre;line-height:normal;color:#000;font-family:'Liberation Serif', serif;font-size:16px;font-weight:normal;font-style:normal;text-decoration:none;-webkit-text-stroke:0.15px #000;">7182</div>
<div style="position:absolute;left:437.50px;top:651.00px;white-space:pre;line-height:normal;color:#000;font-family:'Liberation Serif', serif;font-size:16px;font-weight:normal;font-style:normal;text-decoration:none;-webkit-text-stroke:0.15px #000;">268.0</div>
<div style="position:absolute;left:505.50px;top:651.00px;white-space:pre;line-height:normal;color:#000;font-family:'Liberation Serif', serif;font-size:16px;font-weight:normal;font-style:normal;text-decoration:none;-webkit-text-stroke:0.15px #000;">267.2</div>
<div style="position:absolute;left:580.50px;top:651.00px;white-space:pre;line-height:normal;color:#000;font-family:'Liberation Serif', serif;font-size:16px;font-weight:normal;font-style:normal;text-decoration:none;-webkit-text-stroke:0.15px #000;">26.8</div>
<div style="position:absolute;left:663.50px;top:651.00px;white-space:pre;line-height:normal;color:#000;font-family:'Liberation Serif', serif;font-size:16px;font-weight:normal;font-style:normal;text-decoration:none;-webkit-text-stroke:0.15px #000;">24</div>
<div style="position:absolute;left:726.50px;top:651.00px;white-space:pre;line-height:normal;color:#000;font-family:'Liberation Serif', serif;font-size:16px;font-weight:normal;font-style:normal;text-decoration:none;-webkit-text-stroke:0.15px #000;">0.0</div>
<div style="position:absolute;left:777.50px;top:651.00px;white-space:pre;line-height:normal;color:#000;font-family:'Liberation Serif', serif;font-size:16px;font-weight:normal;font-style:normal;text-decoration:none;-webkit-text-stroke:0.15px #000;">268.0</div>
<div style="position:absolute;left:180.40px;top:681.00px;white-space:pre;line-height:normal;color:#000;font-family:'Liberation Serif', serif;font-size:16px;font-weight:bold;font-style:normal;text-decoration:none;-webkit-text-stroke:0.15px #000;">Total FTE: # Overall Sections (&#x27;Lines&#x27;) divided by 6:</div>
<div style="position:absolute;left:554.40px;top:681.00px;white-space:pre;line-height:normal;color:#000;font-family:'Liberation Serif', serif;font-size:16px;font-weight:bold;font-style:normal;text-decoration:none;transform:scaleX(1.0020);transform-origin:0 0;-webkit-text-stroke:0.15px #000;">268.0 / 6 = 44.667 FTE</div>
</div></body></html>
